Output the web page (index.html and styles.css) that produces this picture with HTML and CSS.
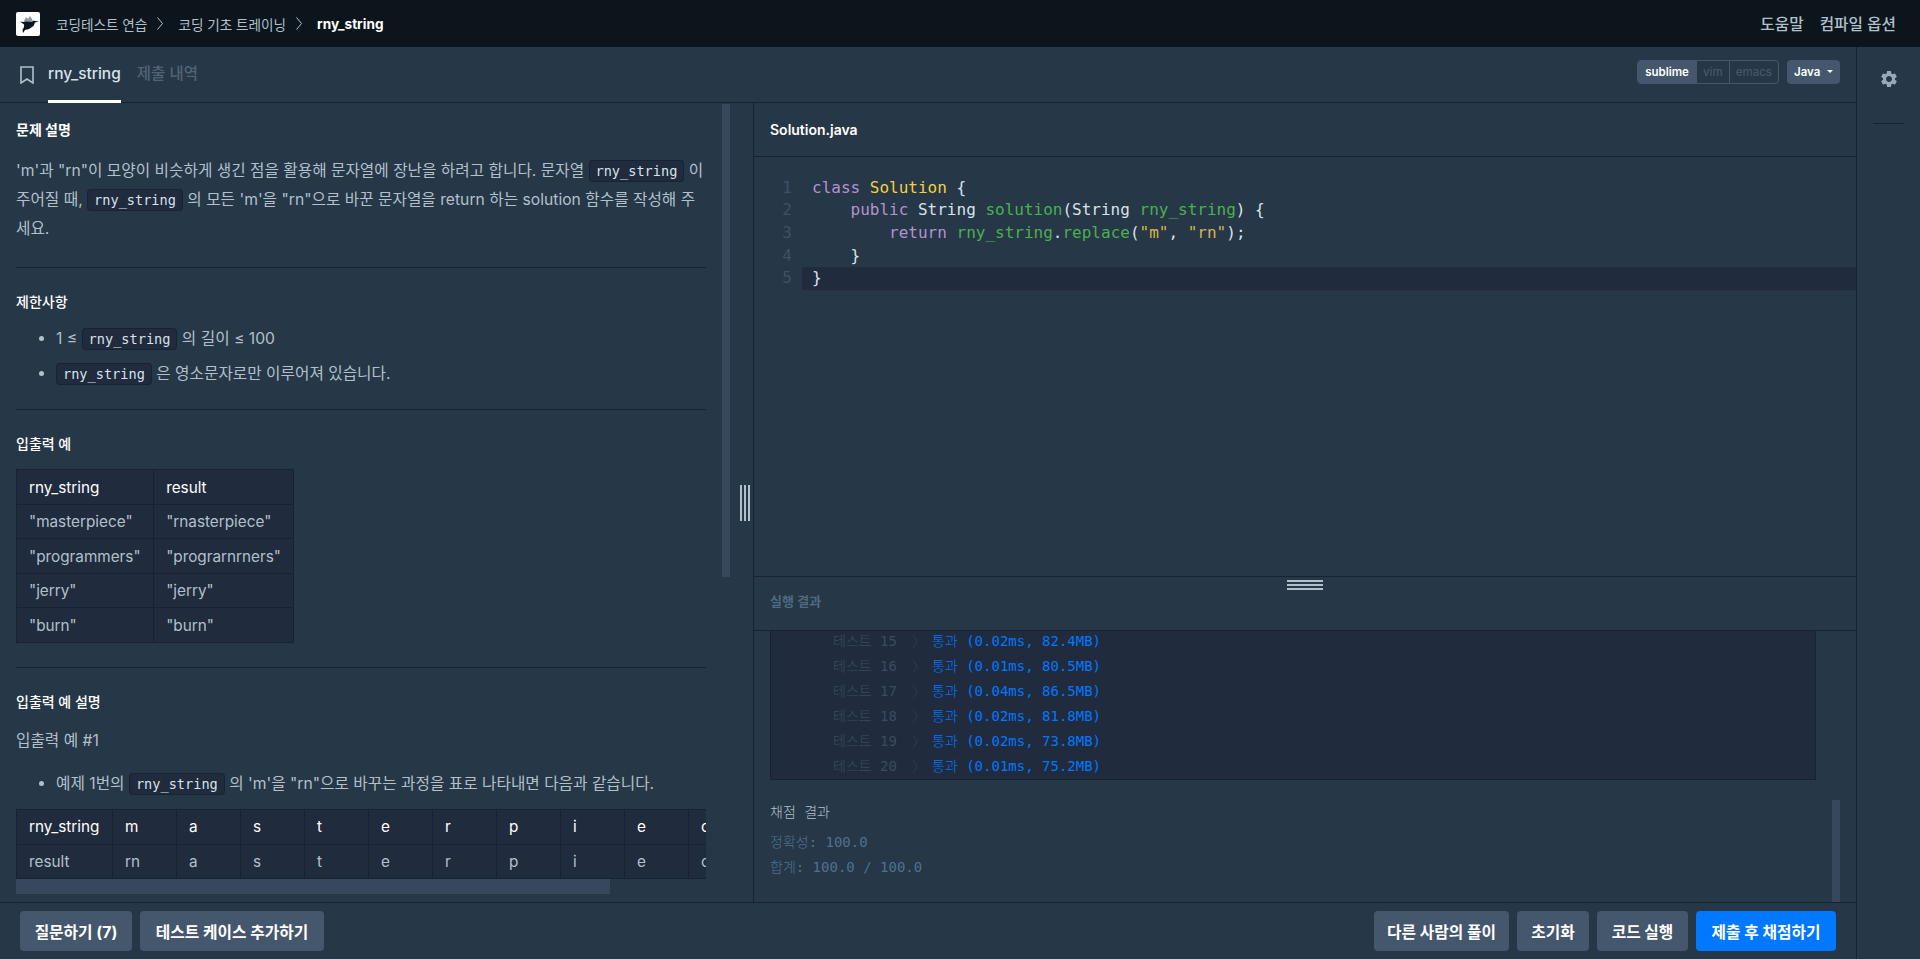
FILE: index.html
```html
<!DOCTYPE html>
<html lang="ko">
<head>
    <meta charset="UTF-8">
    <title>rny_string</title>
    <link rel="stylesheet" href="styles.css">
</head>
<body>
    <header class="navbar">
        <div class="logo">
            <svg width="24" height="24" viewBox="0 0 24 24">
                <path d="M7 11 L10 5 L12 7 L14 4 L16 7 L17 10 L14 10 Z" fill="#8f98a3"/>
                <path d="M4 9.5 L8 10 L11 9.5 L16 10 L17.500 8.500 L19 9 L23 9.500 L19 10.500 L17.500 14 L13 17 L9 18 L7 21 L6.500 18 L8 15 L8 12.500 Z" fill="#0c151c"/>
            </svg>
        </div>
        <nav class="crumbs">
            <a>코딩테스트 연습</a>
            <svg class="crumb-sep" width="6" height="13" viewBox="0 0 6 13"><path d="M0.500 0.500 L5.500 6.500 L0.500 12.500" fill="none" stroke="#b2c0cc"/></svg>
            <a>코딩 기초 트레이닝</a>
            <svg class="crumb-sep" width="6" height="13" viewBox="0 0 6 13"><path d="M0.500 0.500 L5.500 6.500 L0.500 12.500" fill="none" stroke="#b2c0cc"/></svg>
            <b>rny_string</b>
        </nav>
        <div class="nav-links">
            <a>도움말</a>
            <a>컴파일 옵션</a>
        </div>
    </header>

    <div class="main">
        <div class="workspace">
            <div class="tabbar">
                <svg class="bookmark" width="14" height="18" viewBox="0 0 14 18"><path d="M1 1 H13 V17 L7 13 L1 17 Z" fill="none" stroke="#b2c0cc" stroke-width="1.600"/></svg>
                <a class="tab active">rny_string</a>
                <a class="tab">제출 내역</a>
                <div class="tabbar-right">
                    <div class="keymap">
                        <span class="on">sublime</span>
                        <span>vim</span>
                        <span>emacs</span>
                    </div>
                    <div class="lang">Java<i class="caret"></i></div>
                </div>
            </div>

            <div class="panes">
                <section class="guide">
                    <div class="guide-content">
                        <h5 class="first">문제 설명</h5>
                        <p class="lead">'m'과 "rn"이 모양이 비슷하게 생긴 점을 활용해 문자열에 장난을 하려고 합니다. 문자열 <code>rny_string</code> 이 주어질 때, <code>rny_string</code> 의 모든 'm'을 "rn"으로 바꾼 문자열을 return 하는 solution 함수를 작성해 주세요.</p>
                        <hr class="after-lead">
                        <h5>제한사항</h5>
                        <ul class="limits">
                            <li>1 ≤ <code>rny_string</code> 의 길이 ≤ 100</li>
                            <li><code>rny_string</code> 은 영소문자로만 이루어져 있습니다.</li>
                        </ul>
                        <hr>
                        <h5>입출력 예</h5>
                        <table class="t-small">
                            <tr><th>rny_string</th><th>result</th></tr>
                            <tr><td>"masterpiece"</td><td>"rnasterpiece"</td></tr>
                            <tr><td>"programmers"</td><td>"prograrnrners"</td></tr>
                            <tr><td>"jerry"</td><td>"jerry"</td></tr>
                            <tr><td>"burn"</td><td>"burn"</td></tr>
                        </table>
                        <hr class="after-table">
                        <h5>입출력 예 설명</h5>
                        <p class="ex-title">입출력 예 #1</p>
                        <ul class="ex-list">
                            <li>예제 1번의 <code>rny_string</code> 의 'm'을 "rn"으로 바꾸는 과정을 표로 나타내면 다음과 같습니다.</li>
                        </ul>
                        <div class="table-scroll">
                            <table class="t-wide">
                                <col class="col-first"><col class="col-cell" span="11">
                                <tr><th>rny_string</th><th>m</th><th>a</th><th>s</th><th>t</th><th>e</th><th>r</th><th>p</th><th>i</th><th>e</th><th>c</th><th>e</th></tr>
                                <tr><td>result</td><td>rn</td><td>a</td><td>s</td><td>t</td><td>e</td><td>r</td><td>p</td><td>i</td><td>e</td><td>c</td><td>e</td></tr>
                            </table>
                        </div>
                        <div class="hscroll"><div class="hscroll-thumb"></div></div>
                    </div>
                    <div class="thumb-guide"></div>
                    <div class="grip-v"><i></i><i></i><i></i></div>
                </section>

                <section class="run">
                    <div class="file-head">Solution.java</div>
                    <div class="editor">
                        <div class="line"><span class="num">1</span><span class="kw">class</span> <span class="cls">Solution</span> {</div>
                        <div class="line"><span class="num">2</span>    <span class="kw">public</span> String <span class="fn">solution</span>(String <span class="fn">rny_string</span>) {</div>
                        <div class="line"><span class="num">3</span>        <span class="kw">return</span> <span class="fn">rny_string</span>.<span class="fn">replace</span>(<span class="str">"m"</span>, <span class="str">"rn"</span>);</div>
                        <div class="line"><span class="num">4</span>    }</div>
                        <div class="line current"><span class="num">5</span>}</div>
                    </div>
                    <div class="result-head">
                        실행 결과
                        <div class="grip-h"><i></i><i></i><i></i></div>
                    </div>
                    <div class="result-body">
                        <div class="console">
                            <div class="row"><span class="t-name">테스트 15</span><span class="t-sep">〉</span><span class="t-pass">통과 (0.02ms, 82.4MB)</span></div>
                            <div class="row"><span class="t-name">테스트 16</span><span class="t-sep">〉</span><span class="t-pass">통과 (0.01ms, 80.5MB)</span></div>
                            <div class="row"><span class="t-name">테스트 17</span><span class="t-sep">〉</span><span class="t-pass">통과 (0.04ms, 86.5MB)</span></div>
                            <div class="row"><span class="t-name">테스트 18</span><span class="t-sep">〉</span><span class="t-pass">통과 (0.02ms, 81.8MB)</span></div>
                            <div class="row"><span class="t-name">테스트 19</span><span class="t-sep">〉</span><span class="t-pass">통과 (0.02ms, 73.8MB)</span></div>
                            <div class="row"><span class="t-name">테스트 20</span><span class="t-sep">〉</span><span class="t-pass">통과 (0.01ms, 75.2MB)</span></div>
                        </div>
                        <div class="score">
                            <div class="score-title">채점 결과</div>
                            <div>정확성: 100.0</div>
                            <div>합계: 100.0 / 100.0</div>
                        </div>
                        <div class="thumb-result"></div>
                    </div>
                </section>
            </div>

            <footer class="actions">
                <div class="btn-group">
                    <button class="btn btn-ask">질문하기 (7)</button>
                    <button class="btn btn-case">테스트 케이스 추가하기</button>
                </div>
                <div class="btn-group">
                    <button class="btn btn-others">다른 사람의 풀이</button>
                    <button class="btn btn-reset">초기화</button>
                    <button class="btn btn-run">코드 실행</button>
                    <button class="btn btn-submit">제출 후 채점하기</button>
                </div>
            </footer>
        </div>

        <aside class="sidebar">
            <svg class="gear" width="20" height="20" viewBox="0 0 24 24"><path fill="#98a8b9" d="M19.14 12.94c.04-.3.06-.61.06-.94 0-.32-.02-.64-.07-.94l2.03-1.58c.18-.14.23-.41.12-.61l-1.92-3.32c-.12-.22-.37-.29-.59-.22l-2.39.96c-.5-.38-1.03-.7-1.62-.94l-.36-2.54c-.04-.24-.24-.41-.48-.41h-3.84c-.24 0-.43.17-.47.41l-.36 2.54c-.59.24-1.13.57-1.62.94l-2.39-.96c-.22-.08-.47 0-.59.22L2.74 8.87c-.12.21-.08.47.12.61l2.03 1.58c-.05.3-.09.63-.09.94s.02.64.07.94l-2.03 1.58c-.18.14-.23.41-.12.61l1.92 3.32c.12.22.37.29.59.22l2.39-.96c.5.38 1.03.7 1.62.94l.36 2.54c.05.24.24.41.48.41h3.84c.24 0 .44-.17.47-.41l.36-2.54c.59-.24 1.13-.56 1.62-.94l2.39.96c.22.08.47 0 .59-.22l1.92-3.32c.12-.22.07-.47-.12-.61l-2.01-1.58zM12 15.6c-1.98 0-3.6-1.62-3.6-3.6s1.62-3.6 3.6-3.6 3.6 1.62 3.6 3.6-1.62 3.6-3.6 3.6z"/></svg>
            <div class="side-line"></div>
        </aside>
    </div>
</body>
</html>
```

FILE: styles.css
```css
* {
    box-sizing: border-box;
}

html, body {
    margin: 0;
    height: 100%;
}

body {
    display: flex;
    flex-direction: column;
    overflow: hidden;
    background-color: #263747;
    color: #b2c0cc;
    font-family: Inter, "Noto Sans CJK KR", sans-serif;
    font-size: 15.7px;
}

/* navbar */
.navbar {
    display: flex;
    align-items: center;
    flex: none;
    height: 47px;
    padding: 0 24px 0 16px;
    background-color: #0c151c;
}

.logo {
    width: 24px;
    height: 24px;
    background-color: #fff;
    border-radius: 2px;
}

.logo svg {
    display: block;
}

.crumbs {
    display: flex;
    align-items: center;
    margin-left: 16px;
    font-size: 13.6px;
}

.crumb-sep {
    margin: 0 15px 0 10px;
}

.crumbs b {
    color: #fff;
    font-weight: 700;
}

.nav-links {
    display: flex;
    gap: 16px;
    margin-left: auto;
    font-weight: 500;
}

/* tabs */
.main {
    display: flex;
    flex: 1;
    min-height: 0;
}

.workspace {
    display: flex;
    flex-direction: column;
    flex: 1;
    min-width: 0;
}

.tabbar {
    display: flex;
    align-items: center;
    flex: none;
    height: 56px;
    padding: 0 16px 0 20px;
    border-bottom: 1px solid #172334;
}

.bookmark {
    margin-right: 14px;
}

.tab {
    height: 56px;
    margin-right: 16px;
    line-height: 54px;
    color: #4f6477;
    font-size: 15.5px;
    font-weight: 500;
}

.tab.active {
    color: #d7e2eb;
    border-bottom: 3px solid #fff;
}

.tabbar-right {
    display: flex;
    gap: 8px;
    margin-left: auto;
    margin-top: -6px;
    font-size: 11.5px;
    font-weight: 500;
}

.keymap {
    display: flex;
    height: 24px;
    border: 1px solid #44576c;
    border-radius: 4px;
    overflow: hidden;
    color: #44576c;
}

.keymap span {
    padding: 0 6px;
    line-height: 22px;
    border-left: 1px solid #44576c;
}

.keymap span:first-child {
    border-left: none;
}

.keymap .on {
    padding: 0 7px;
    background-color: #44576c;
    color: #fff;
    font-weight: 600;
}

.lang {
    display: flex;
    align-items: center;
    width: 53px;
    height: 24px;
    padding-left: 7px;
    background-color: #44576c;
    border-radius: 4px;
    color: #fff;
    font-weight: 600;
}

.caret {
    width: 0;
    height: 0;
    margin-left: 7px;
    border-top: 3px solid #fff;
    border-left: 3px solid transparent;
    border-right: 3px solid transparent;
}

/* panes */
.panes {
    display: flex;
    flex: 1;
    min-height: 0;
}

.guide {
    position: relative;
    flex: none;
    width: 754px;
    border-right: 1px solid #172334;
    overflow: hidden;
}

.guide-content {
    width: 706px;
    padding: 16px 0 0 16px;
}

h5 {
    margin: 0 0 14px;
    font-size: 14px;
    line-height: 22px;
    font-weight: 500;
    color: #fff;
}

h5.first {
    font-weight: 700;
}

p {
    margin: 0;
    line-height: 28.8px;
    word-break: break-all;
}

.lead {
    margin-top: 16px;
}

hr {
    height: 1px;
    margin: 25px 0 23px;
    border: none;
    background-color: #172334;
}

hr.after-lead {
    margin-top: 24px;
}

hr.after-table {
    margin-top: 24px;
}

ul {
    margin: 0;
    padding-left: 40px;
}

.limits {
    margin: -5px 0 -7px;
}

li {
    line-height: 34.5px;
}

code {
    padding: 2px 6px;
    background-color: #202b3d;
    border: 1px solid #172334;
    border-radius: 4px;
    color: #d7e2eb;
    font-family: "DejaVu Sans Mono", monospace;
    font-size: 13.6px;
    line-height: 1;
}

table {
    border-collapse: collapse;
    background-color: #202b3d;
    font-size: 15.3px;
}

th, td {
    height: 34.5px;
    padding: 0 12px;
    border: 1px solid #172334;
    text-align: left;
    white-space: nowrap;
}

th {
    color: #fff;
    font-weight: 400;
}

.t-small {
    width: 278px;
}

.t-small th:first-child {
    width: 138px;
}

.ex-title {
    margin-bottom: 11px;
}

.ex-list {
    margin-bottom: 8px;
}

.table-scroll {
    width: 690px;
    overflow: hidden;
}

.t-wide {
    table-layout: fixed;
    width: 800px;
}

.col-first {
    width: 96px;
}

.col-cell {
    width: 64px;
}

.hscroll {
    width: 690px;
    height: 15px;
}

.hscroll-thumb {
    width: 594px;
    height: 15px;
    background-color: #37475c;
}

.thumb-guide {
    position: absolute;
    left: 722px;
    top: 1px;
    width: 8px;
    height: 473px;
    background-color: #37475c;
}

.grip-v {
    position: absolute;
    left: 740px;
    top: 382px;
    display: flex;
    gap: 2px;
    height: 36px;
}

.grip-v i {
    width: 2px;
    background-color: #b2c0cc;
}

/* editor side */
.run {
    display: flex;
    flex-direction: column;
    flex: 1;
    min-width: 0;
}

.file-head {
    flex: none;
    height: 54px;
    padding: 0 16px;
    line-height: 53px;
    border-bottom: 1px solid #172334;
    color: #fff;
    font-size: 14px;
    font-weight: 600;
}

.editor {
    flex: none;
    height: 420px;
    padding-top: 19.5px;
    border-bottom: 1px solid #172334;
    color: #d7e2eb;
    font-family: "DejaVu Sans Mono", monospace;
    font-size: 16px;
}

.line {
    height: 22.7px;
    line-height: 22.7px;
    margin-left: 48px;
    padding-left: 10px;
    white-space: pre;
}

.line.current {
    background-color: #202b3d;
}

.num {
    display: inline-block;
    width: 21px;
    margin-left: -41px;
    margin-right: 20px;
    text-align: right;
    color: #3f5166;
}

.kw { color: #b392d0; }
.cls { color: #f4d03f; }
.fn { color: #4caf50; }
.str { color: #d9b44a; }

.result-head {
    position: relative;
    flex: none;
    height: 54px;
    padding: 0 16px;
    line-height: 49px;
    border-bottom: 1px solid #172334;
    color: #4f6a82;
    font-size: 13px;
    font-weight: 600;
}

.grip-h {
    position: absolute;
    left: 533px;
    top: 3px;
    width: 36px;
}

.grip-h i {
    display: block;
    height: 2px;
    margin-bottom: 2px;
    background-color: #b2c0cc;
}

.result-body {
    position: relative;
    flex: 1;
    min-height: 0;
    padding: 0 16px;
    font-family: "DejaVu Sans Mono", "Noto Sans CJK KR", monospace;
    font-size: 14px;
    font-weight: 300;
}

.console {
    display: flex;
    flex-direction: column;
    justify-content: flex-end;
    height: 149px;
    width: 1046px;
    overflow: hidden;
    padding-left: 62px;
    background-color: #202b3d;
    border: 1px solid #172334;
    border-top: none;
}

.row {
    display: flex;
    flex: none;
    height: 25px;
    line-height: 25px;
}

.t-name {
    width: 79px;
    color: #3a4c60;
}

.t-sep {
    width: 20px;
    color: #2f4053;
}

.t-pass {
    color: #0078ff;
}

.score {
    padding-top: 20px;
    color: #4f7190;
    line-height: 25px;
}

.score-title {
    margin-bottom: 5px;
    color: #b2c0cc;
}

.thumb-result {
    position: absolute;
    right: 16px;
    bottom: 0;
    width: 8px;
    height: 102px;
    background-color: #37475c;
}

/* footer */
.actions {
    display: flex;
    justify-content: space-between;
    flex: none;
    height: 57px;
    padding: 8px 20px;
    border-top: 1px solid #172334;
}

.btn-group {
    display: flex;
    gap: 8px;
}

.btn {
    height: 40px;
    padding: 0;
    background-color: #44576c;
    border: none;
    border-radius: 4px;
    color: #fff;
    font-family: Inter, "Noto Sans CJK KR", sans-serif;
    font-size: 15.75px;
    font-weight: 700;
}

.btn-ask { width: 112px; }
.btn-case { width: 184px; }
.btn-others { width: 135px; }
.btn-reset { width: 72px; }
.btn-run { width: 91px; }

.btn-submit {
    width: 140px;
    background-color: #0078ff;
}

/* settings */
.sidebar {
    flex: none;
    width: 64px;
    border-left: 1px solid #172334;
}

.gear {
    display: block;
    margin: 22px auto 0;
}

.side-line {
    width: 31px;
    height: 1px;
    margin: 34px auto 0;
    background-color: #172334;
}
```
